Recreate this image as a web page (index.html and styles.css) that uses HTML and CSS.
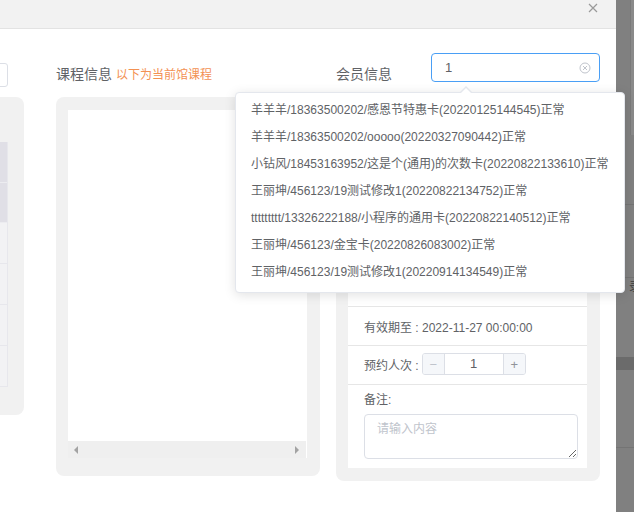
FILE: index.html
```html
<!DOCTYPE html>
<html lang="zh-CN">
<head>
<meta charset="utf-8">
<title>预约</title>
<link rel="stylesheet" href="styles.css">
</head>
<body>
<div class="page">
  <div class="modal">
    <div class="modal-header">
      <span class="close">
        <svg width="10" height="10" viewBox="0 0 10 10"><path d="M1 1 L9 9 M9 1 L1 9" stroke="#9a9a9a" stroke-width="1.2" fill="none"/></svg>
      </span>
    </div>
    <div class="modal-body">
      <div class="col col-left">
        <div class="col-head left-head"><div class="fake-input"></div></div>
        <div class="panel panel-left">
          <div class="tbl">
            <div class="tr th th1"></div>
            <div class="tr th th2"></div>
            <div class="tr"></div>
            <div class="tr"></div>
            <div class="tr"></div>
            <div class="tr"></div>
          </div>
        </div>
      </div>

      <div class="col col-mid">
        <div class="col-head mid-head"><span class="label">课程信息</span><span class="hint">以下为当前馆课程</span></div>
        <div class="panel panel-mid">
          <div class="course-view">
            <div class="course-list"></div>
            <div class="hscroll"><span class="arrow left"></span><span class="arrow right"></span></div>
          </div>
        </div>
      </div>

      <div class="col col-right">
        <div class="col-head member-head">
          <span class="label">会员信息</span>
          <div class="select">
            <div class="select-input">
              <span class="val">1</span>
              <svg class="clear" width="12" height="12" viewBox="0 0 12 12"><circle cx="6" cy="6" r="5" stroke="#c0c4cc" stroke-width="1" fill="none"/><path d="M4 4 L8 8 M8 4 L4 8" stroke="#c0c4cc" stroke-width="1" fill="none"/></svg>
            </div>
            <ul class="dropdown">
              <li>羊羊羊/18363500202/感恩节特惠卡(20220125144545)正常</li>
              <li>羊羊羊/18363500202/ooooo(20220327090442)正常</li>
              <li>小钻风/18453163952/这是个(通用)的次数卡(20220822133610)正常</li>
              <li>王丽坤/456123/19测试修改1(20220822134752)正常</li>
              <li>ttttttttt/13326222188/小程序的通用卡(20220822140512)正常</li>
              <li>王丽坤/456123/金宝卡(20220826083002)正常</li>
              <li>王丽坤/456123/19测试修改1(20220914134549)正常</li>
            </ul>
          </div>
        </div>
        <div class="panel panel-right">
          <div class="card">
            <div class="row row-top"></div>
            <div class="row row-date">有效期至 : 2022-11-27 00:00:00</div>
            <div class="row row-count">
              <span>预约人次 :</span>
              <div class="num">
                <span class="num-btn dec">−</span>
                <span class="num-val">1</span>
                <span class="num-btn inc">+</span>
              </div>
            </div>
            <div class="row row-remark">
              <span class="remark-label">备注:</span>
              <textarea class="remark-input" placeholder="请输入内容"></textarea>
            </div>
          </div>
        </div>
      </div>
    </div>
  </div>
  <div class="backdrop">
    <div class="bd-a"><div class="bd-piece"></div></div>
    <div class="bd-b"></div>
    <div class="bd-c"></div>
    <div class="bd-d"><span class="bd-text">录</span></div>
    <div class="bd-band"></div>
    <div class="bd-e"></div>
  </div>
</div>
</body>
</html>
```

FILE: styles.css
```css
* { box-sizing: border-box; margin: 0; padding: 0; }

html, body {
  width: 634px;
  height: 512px;
  overflow: hidden;
}

body {
  font-family: "Liberation Sans", "Noto Sans CJK SC", sans-serif;
  font-size: 12px;
  color: #606266;
  background: #808080;
}

.page {
  display: flex;
  width: 634px;
  height: 512px;
}

/* modal */
.modal {
  width: 616px;
  flex: none;
  background: #fff;
  display: flex;
  flex-direction: column;
  position: relative;
  z-index: 2;
}

.modal-header {
  height: 29px;
  flex: none;
  background: #f2f2f2;
  border-bottom: 1px solid #e3e3e3;
  display: flex;
  justify-content: flex-end;
  padding: 3px 18px 0 0;
}

.close { width: 10px; height: 10px; display: block; }
.close svg { display: block; }

.modal-body {
  flex: 1;
  display: flex;
  gap: 16px;
  padding: 24px 16px 0 0;
}

.col-head { height: 44px; }

.panel {
  background: #f1f1f1;
  border-radius: 8px;
}

/* left column (partly off screen) */
.col-left {
  width: 200px;
  flex: none;
  margin-left: -176px;
  margin-right: 16px;
}

.left-head { padding: 10px 16px 0 0; }

.fake-input {
  height: 24px;
  border: 1px solid #dcdfe6;
  border-radius: 3px;
  background: #fff;
}

.panel-left {
  height: 318px;
  padding: 45px 16px 0 0;
}

.tbl {
  border-right: 1px solid #e7e7ec;
}

.tr {
  height: 41px;
  border-bottom: 1px solid #e7e7ec;
  background: #f2f2f4;
}

.th { background: #e0dfe6; border-bottom-color: #ececf0; }
.th2 { height: 40px; }

/* middle column */
.col-mid { width: 264px; flex: none; }

.mid-head { padding-top: 11px; line-height: 20px; }

.label { font-size: 14px; color: #606266; }

.hint {
  font-size: 12px;
  color: #f39153;
  margin-left: 4px;
}

.panel-mid {
  height: 379px;
  padding: 13px 13px 18px 12px;
}

.course-view {
  background: #fff;
  height: 348px;
  display: flex;
  flex-direction: column;
}

.course-list { flex: 1; }

.hscroll {
  height: 17px;
  background: #efefef;
  margin-right: 1px;
  display: flex;
  justify-content: space-between;
  align-items: center;
  padding: 0 7px 0 6px;
}

.arrow {
  width: 0;
  height: 0;
  border-top: 4px solid transparent;
  border-bottom: 4px solid transparent;
}
.arrow.left { border-right: 4px solid #a3a3a3; }
.arrow.right { border-left: 4px solid #a3a3a3; }

/* right column */
.col-right { width: 264px; flex: none; }

.member-head {
  display: flex;
  justify-content: space-between;
  align-items: flex-start;
}
.member-head .label { padding-top: 11px; line-height: 20px; }

.select {
  position: relative;
  width: 169px;
}

.select-input {
  height: 29px;
  border: 1px solid #4a9ff5;
  border-radius: 4px;
  display: flex;
  align-items: center;
  justify-content: space-between;
  padding: 0 8px 0 13px;
  font-size: 13px;
  color: #606266;
  background: #fff;
}

.clear { display: block; }

.dropdown {
  position: absolute;
  left: -196px;
  top: 39px;
  width: 390px;
  background: #fff;
  border: 1px solid #e4e7ed;
  border-radius: 4px;
  box-shadow: 0 2px 12px rgba(0, 0, 0, 0.12);
  padding: 4px 0 6px;
  list-style: none;
  z-index: 10;
}

.dropdown::before,
.dropdown::after {
  content: "";
  position: absolute;
  width: 0;
  height: 0;
  border-style: solid;
  border-color: transparent;
}
.dropdown::before {
  left: 224px;
  top: -7px;
  border-width: 0 6px 6px 6px;
  border-bottom-color: #e4e7ed;
}
.dropdown::after {
  left: 225px;
  top: -5px;
  border-width: 0 5px 5px 5px;
  border-bottom-color: #fff;
}

.dropdown li {
  height: 27px;
  line-height: 27px;
  padding-left: 15px;
  white-space: nowrap;
  font-size: 12px;
  color: #606266;
}

.panel-right {
  height: 384px;
  padding: 13px 13px 13px 12px;
}

.card {
  background: #fff;
  height: 358px;
  display: flex;
  flex-direction: column;
}

.row {
  padding-left: 16px;
  border-bottom: 1px solid #e6e6e6;
  display: flex;
  align-items: center;
  font-size: 12px;
  color: #606266;
}

.row-top { height: 197px; }
.row-date { height: 39px; padding-top: 1px; }
.row-count { height: 39px; padding-bottom: 2px; }

.num {
  display: flex;
  height: 22px;
  width: 104px;
  border: 1px solid #dcdfe6;
  border-radius: 3px;
  margin-left: 3px;
  overflow: hidden;
}

.num-btn {
  width: 22px;
  flex: none;
  background: #f5f7fa;
  display: flex;
  align-items: center;
  justify-content: center;
  font-size: 13px;
}
.num-btn.dec { border-right: 1px solid #dcdfe6; color: #c0c4cc; }
.num-btn.inc { border-left: 1px solid #dcdfe6; color: #909399; }

.num-val {
  flex: 1;
  text-align: center;
  line-height: 20px;
  font-size: 13px;
  color: #606266;
}

.row-remark {
  flex: 1;
  border-bottom: none;
  flex-direction: column;
  align-items: stretch;
  padding: 5px 9px 0 16px;
}

.remark-label { line-height: 20px; }

.remark-input {
  margin-top: 4px;
  height: 45px;
  width: 100%;
  border: 1px solid #dcdfe6;
  border-radius: 4px;
  padding: 5px 12px;
  font-family: "Liberation Sans", "Noto Sans CJK SC", sans-serif;
  font-size: 12px;
  line-height: 18px;
  color: #606266;
  resize: vertical;
  outline: none;
}
.remark-input::placeholder { color: #c0c4cc; }

/* dimmed page behind the modal */
.backdrop {
  flex: 1;
  background: #808080;
  display: flex;
  flex-direction: column;
  overflow: hidden;
}

.bd-a { height: 135px; display: flex; }
.bd-piece {
  margin-left: 14px;
  flex: 1;
  background: #8a8a8a;
  border-left: 1px solid #7a7a7a;
}
.bd-b { height: 70px; border-bottom: 1px solid #747474; }
.bd-c { height: 73px; border-bottom: 1px solid #747474; }
.bd-d { height: 79px; padding: 0 0 0 13px; }
.bd-text { font-size: 12px; line-height: 18px; color: #3c3c3c; white-space: nowrap; }
.bd-band { height: 13px; background: #6b6b6b; }
.bd-e { height: 78px; border-bottom: 1px solid #747474; }
```
